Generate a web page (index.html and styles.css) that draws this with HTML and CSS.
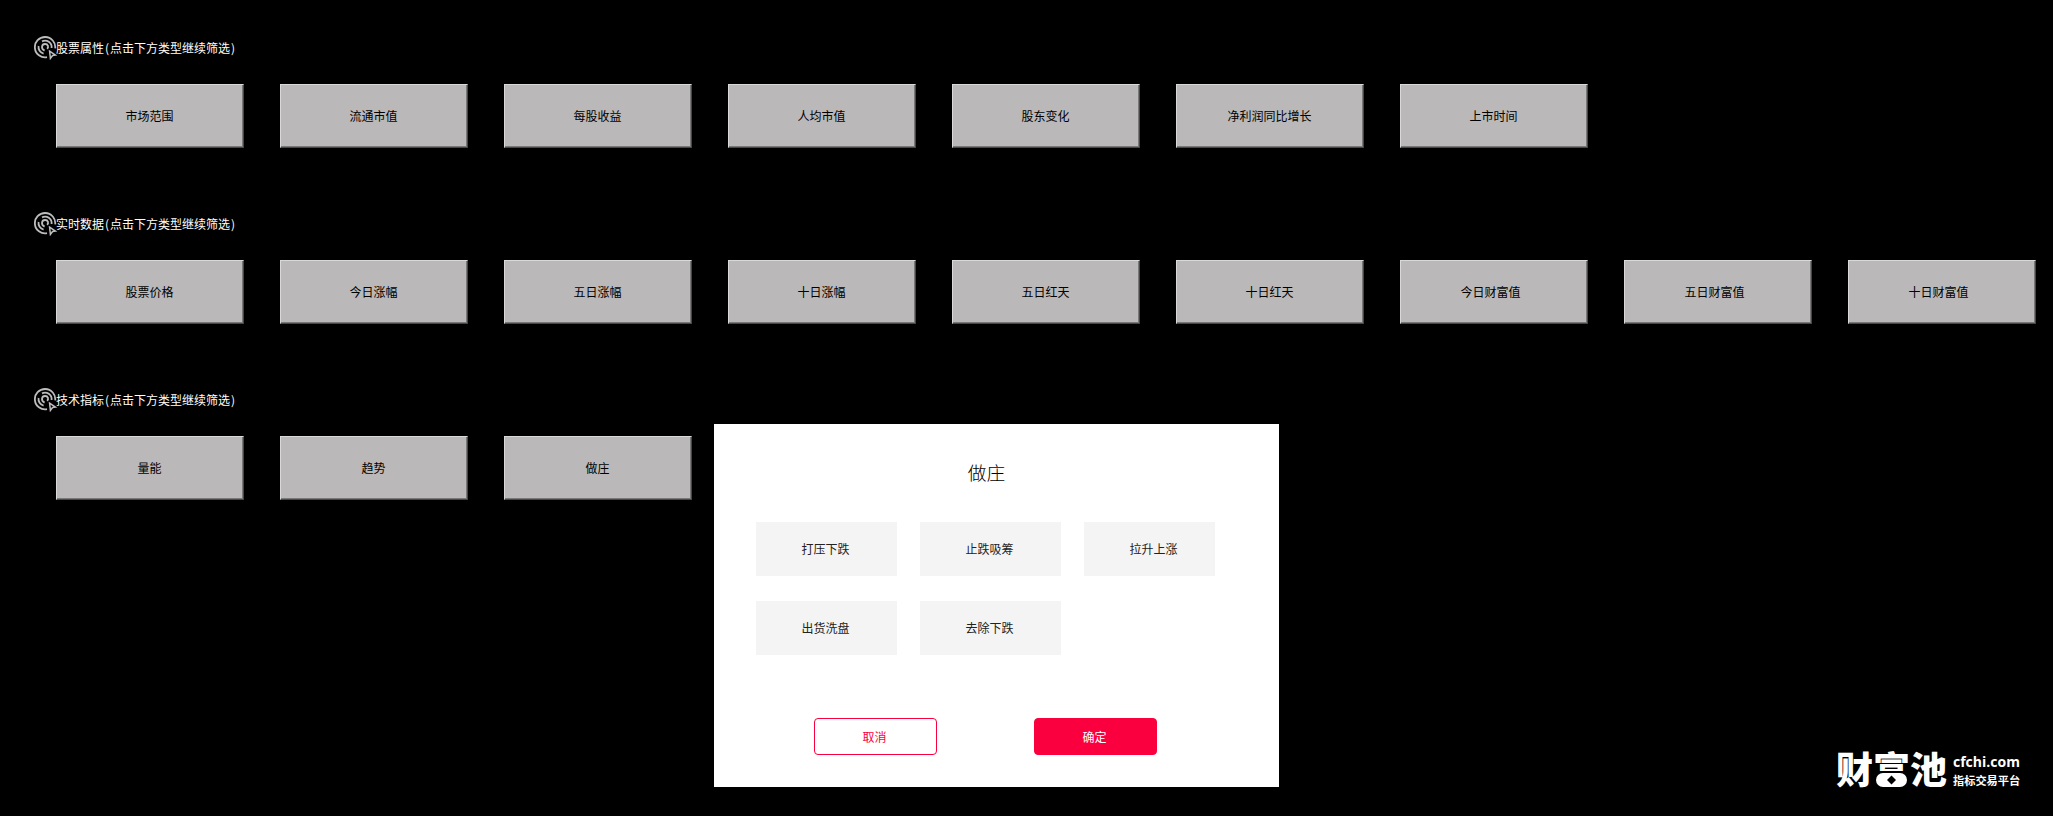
FILE: index.html
```html
<!DOCTYPE html>
<html lang="zh-CN">
<head>
<meta charset="utf-8">
<title>选股</title>
<link rel="stylesheet" href="styles.css">
</head>
<body>
<svg width="0" height="0" class="defs">
  <symbol id="touch" viewBox="0 0 24 24">
    <g fill="none" stroke="#bdbdbd" stroke-width="1.8">
      <path d="M13 21.2A10.2 10.2 0 1 1 21.2 12.4"/>
      <path d="M9.6 17.6A6.6 6.6 0 0 1 4.6 10M8 5.4A6.6 6.6 0 0 1 17.6 12"/>
      <path d="M10.6 14.6C6.6 12.8 7.6 8 11 8C14.2 8 15 11.4 13 12.8"/>
      <path d="M15.6 15.2L21.4 19 18.6 19.5 16.4 22.4Z" stroke-width="1.5"/>
    </g>
  </symbol>
</svg>
<main class="page">
  <section class="group">
    <h2 class="group-title"><svg class="icon"><use href="#touch"/></svg><span>股票属性<i>(</i>点击下方类型继续筛选<i>)</i></span></h2>
    <div class="cards">
      <button class="card">市场范围</button><button class="card">流通市值</button><button class="card">每股收益</button><button class="card">人均市值</button><button class="card">股东变化</button><button class="card">净利润同比增长</button><button class="card">上市时间</button>
    </div>
  </section>
  <section class="group">
    <h2 class="group-title"><svg class="icon"><use href="#touch"/></svg><span>实时数据<i>(</i>点击下方类型继续筛选<i>)</i></span></h2>
    <div class="cards">
      <button class="card">股票价格</button><button class="card">今日涨幅</button><button class="card">五日涨幅</button><button class="card">十日涨幅</button><button class="card">五日红天</button><button class="card">十日红天</button><button class="card wealth">今日财富值</button><button class="card wealth">五日财富值</button><button class="card wealth">十日财富值</button>
    </div>
  </section>
  <section class="group">
    <h2 class="group-title"><svg class="icon"><use href="#touch"/></svg><span>技术指标<i>(</i>点击下方类型继续筛选<i>)</i></span></h2>
    <div class="cards">
      <button class="card">量能</button><button class="card">趋势</button><button class="card">做庄</button>
    </div>
  </section>
</main>
<div class="dialog">
  <h3 class="dialog-title">做庄</h3>
  <div class="options">
    <button class="option">打压下跌</button><button class="option">止跌吸筹</button><button class="option">拉升上涨</button>
    <button class="option">出货洗盘</button><button class="option">去除下跌</button>
  </div>
  <div class="actions">
    <button class="action">取消</button><button class="action primary">确定</button>
  </div>
</div>
<div class="brand">
  <span class="brand-name">财<span class="coin-char">富<svg class="coin" viewBox="0 0 35 18"><rect width="35" height="18" fill="#000"/><rect x="2" y="2" width="31" height="14" rx="7" fill="#fff"/><path d="M17.5 4.5L22 9 17.5 13.5 13 9Z" fill="#000"/></svg></span>池</span>
  <span class="brand-side"><b class="brand-url">cfchi.com</b><b class="brand-tag">指标交易平台</b></span>
</div>
</body>
</html>
```
FILE: styles.css
```css
* { box-sizing: border-box; }
body {
  margin: 0;
  height: 816px;
  overflow: hidden;
  background: #000;
  color: #fff;
  font: 12px "Noto Sans CJK SC", sans-serif;
}
button { font: inherit; margin: 0; padding: 0; }
.defs { position: absolute; }
.page { padding: 36px 0 0 34px; }
.group { height: 176px; }
.group-title {
  display: flex;
  height: 24px;
  margin: 0;
  font-size: 12px;
  font-weight: 400;
  line-height: 24px;
}
.group-title span { display: flex; white-space: nowrap; }
.group-title i { width: 6px; font-style: normal; text-align: center; }
.icon { width: 24px; height: 24px; margin-right: -2px; flex: none; }
.cards { display: flex; gap: 36px; padding: 24px 0 0 22px; }
.card {
  flex: none;
  width: 188px;
  height: 64px;
  padding: 0 1px 1px 0;
  border: 1px solid;
  border-color: #d9d9d9 #484747 #484747 #d9d9d9;
  box-shadow: inset -1px -1px #7a7979;
  background: #bab8b9;
  color: #000;
}
.wealth { padding-right: 7px; }
.dialog {
  position: absolute;
  left: 714px;
  top: 424px;
  width: 565px;
  height: 363px;
  padding: 34px 64px 0 42px;
  background: #fff;
}
.dialog-title {
  height: 27px;
  margin: 0 0 37px;
  padding-left: 2px;
  color: #000;
  font-size: 18.67px;
  font-weight: 300;
  line-height: 27px;
  text-align: center;
}
.options {
  display: grid;
  grid-template-columns: repeat(3, 141px);
  gap: 25px 23px;
  overflow: hidden;
}
.option { height: 54px; padding: 0 2px 2px 0; border: 0; background: #f4f4f4; color: #222; }
.actions { display: flex; gap: 97px; padding: 63px 0 0 58px; }
.action {
  flex: none;
  width: 123px;
  height: 37px;
  padding-right: 2px;
  border: 1px solid #fb003f;
  border-radius: 4px;
  background: #fff;
  color: #fb003f;
}
.primary { background: #fb003f; color: #fff; }
.brand { position: absolute; left: 1836px; top: 747px; display: flex; gap: 7px; }
.brand-name { width: 110px; font-size: 37px; font-weight: 900; line-height: 42px; white-space: nowrap; }
.coin-char { position: relative; }
.coin { position: absolute; left: 1px; bottom: 6px; width: 35px; height: 18px; }
.brand-side { display: flex; flex-direction: column; padding-top: 5px; }
.brand-url { height: 20px; font: 700 14px/20px "Open Sans", sans-serif; }
.brand-tag { font-size: 11.2px; line-height: 16px; white-space: nowrap; }
```
